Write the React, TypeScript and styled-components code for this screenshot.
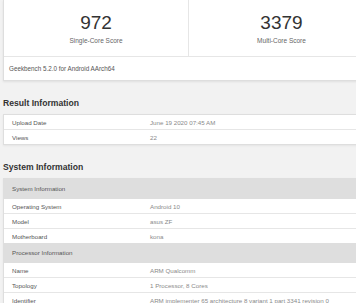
import React from 'react';
import styled, { createGlobalStyle } from 'styled-components';

const GlobalStyle = createGlobalStyle`
  html, body {
    margin: 0;
    background: #f2f2f2;
    overflow: hidden;
  }
  body {
    font-family: "Liberation Sans", Arial, sans-serif;
  }
`;

type Row = { label: string; value: string };

const resultRows: Row[] = [
  { label: 'Upload Date', value: 'June 19 2020 07:45 AM' },
  { label: 'Views', value: '22' },
];

const systemRows: Row[] = [
  { label: 'Operating System', value: 'Android 10' },
  { label: 'Model', value: 'asus ZF' },
  { label: 'Motherboard', value: 'kona' },
];

const processorRows: Row[] = [
  { label: 'Name', value: 'ARM Qualcomm' },
  { label: 'Topology', value: '1 Processor, 8 Cores' },
  { label: 'Identifier', value: 'ARM implementer 65 architecture 8 variant 1 part 3341 revision 0' },
];

export default function App() {
  return (
    <Page>
      <GlobalStyle />
      <ScoreCard>
        <ScoreRow>
          <ScoreCell>
            <ScoreValue>972</ScoreValue>
            <ScoreLabel>Single-Core Score</ScoreLabel>
          </ScoreCell>
          <ScoreCell>
            <ScoreValue>3379</ScoreValue>
            <ScoreLabel>Multi-Core Score</ScoreLabel>
          </ScoreCell>
        </ScoreRow>
        <CardFooter>Geekbench 5.2.0 for Android AArch64</CardFooter>
      </ScoreCard>

      <SectionTitle>Result Information</SectionTitle>
      <Table>
        {resultRows.map((r) => (
          <DataRow key={r.label}>
            <Label>{r.label}</Label>
            <Value>{r.value}</Value>
          </DataRow>
        ))}
      </Table>

      <SectionTitle>System Information</SectionTitle>
      <Table>
        <HeaderRow>System Information</HeaderRow>
        {systemRows.map((r) => (
          <DataRow key={r.label}>
            <Label>{r.label}</Label>
            <Value>{r.value}</Value>
          </DataRow>
        ))}
        <HeaderRow>Processor Information</HeaderRow>
        {processorRows.map((r) => (
          <DataRow key={r.label}>
            <Label>{r.label}</Label>
            <Value>{r.value}</Value>
          </DataRow>
        ))}
      </Table>
    </Page>
  );
}

const Page = styled.div`
  width: 372px;
  padding-left: 3px;
  display: flex;
  flex-direction: column;
`;

const ScoreCard = styled.div`
  background: #fff;
  border: 1px solid #dedede;
  border-top: none;
  box-shadow: 0 1px 2px rgba(0, 0, 0, 0.08);
`;

const ScoreRow = styled.div`
  display: grid;
  grid-template-columns: 184px 1fr;
  height: 56px;
  border-bottom: 1px solid #e6e6e6;
`;

const ScoreCell = styled.div`
  display: flex;
  flex-direction: column;
  align-items: center;
  padding-top: 13px;
  gap: 5px;
  box-sizing: border-box;

  & + & {
    border-left: 1px solid #e6e6e6;
  }
`;

const ScoreValue = styled.div`
  font-size: 19px;
  line-height: 19px;
  color: #333;
`;

const ScoreLabel = styled.div`
  font-size: 6.5px;
  line-height: 8px;
  color: #666;
`;

const CardFooter = styled.div`
  height: 23px;
  line-height: 24px;
  padding-left: 5px;
  font-size: 6.3px;
  color: #555;
`;

const SectionTitle = styled.h2`
  margin: 17px 0 6px;
  font-size: 8.6px;
  line-height: 10px;
  font-weight: 700;
  color: #333;
`;

const Table = styled.div`
  background: #fff;
  border: 1px solid #dedede;
  box-shadow: 0 1px 2px rgba(0, 0, 0, 0.06);
`;

const DataRow = styled.div`
  display: grid;
  grid-template-columns: 146px 1fr;
  height: 14px;
  align-items: center;
  font-size: 6.2px;

  & + & {
    border-top: 1px solid #e6e6e6;
  }
`;

const HeaderRow = styled.div`
  height: 20px;
  line-height: 20px;
  padding-left: 8px;
  background: #dedede;
  font-size: 6.2px;
  color: #555;

  & + ${DataRow} {
    border-top: none;
  }
`;

const Label = styled.span`
  padding-left: 8px;
  color: #555;
`;

const Value = styled.span`
  color: #8a8a8a;
  white-space: nowrap;
`;
